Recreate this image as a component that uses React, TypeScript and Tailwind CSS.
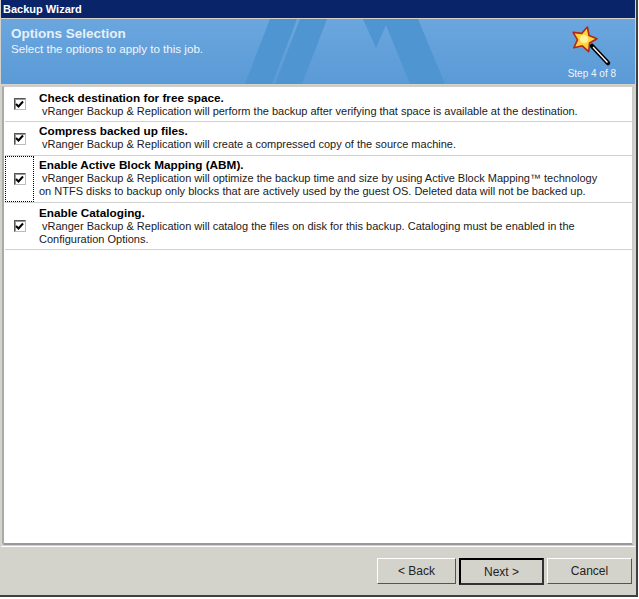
const font = { fontFamily: '"Liberation Sans", Arial, sans-serif' };

function Check() {
  return (
    <span className="flex h-[12px] w-[12px] shrink-0 items-center justify-center border border-t-[#555] border-l-[#555] border-r-[#bbb] border-b-[#bbb] bg-white shadow-[inset_1px_1px_0_#999]">
      <svg width="9" height="9" viewBox="0 0 9 9">
        <path d="M1 4 L3.5 6.5 L8 1.5" fill="none" stroke="#000" strokeWidth="2" />
      </svg>
    </span>
  );
}

function Row({ h, pt, title, lines, focus }: { h: string; pt: string; title: string; lines: string[]; focus?: boolean }) {
  return (
    <div className={`flex ${h} border-b border-[#d0d0d0]`}>
      <div className={`flex w-[29px] shrink-0 items-center justify-center ${focus ? "border border-dotted border-black" : ""}`}>
        <Check />
      </div>
      <div className={`pl-[5px] ${pt} text-[11px] leading-[13px] text-[#1a1a1a]`}>
        <div className="text-[11.75px] font-bold leading-[14px] text-black">{title}</div>
        {lines.map((l, i) => (
          <div key={i} className="whitespace-pre">{l}</div>
        ))}
      </div>
    </div>
  );
}

export default function App() {
  return (
    <div className="h-[599px] w-[639px] overflow-hidden bg-white" style={font}>
      <div className="flex h-[597px] w-[638px] flex-col border-r-2 border-b-2 border-[#404040] bg-[#d4d3cb] px-px">
        <div className="h-[18px] shrink-0 bg-[#0a246a] pl-[2px] text-[11px] font-bold leading-[18px] text-white">
          Backup Wizard
        </div>
        <div className="relative mt-px h-[65px] shrink-0 overflow-hidden bg-gradient-to-b from-[#6ba6de] to-[#5a9ad6] pl-[10px] pt-[8px]">
          <svg className="absolute inset-0" width="634" height="65" viewBox="0 0 634 65">
            <path d="M244 65 L269 0 L296 0 L271 65 Z" fill="#4f95d2" />
            <path d="M274 65 L299 0 L326 0 L301 65 Z" fill="#4f95d2" />
            <path d="M362 0 L417 0 L444 65 L409 65 L385 6 L375 29 Z" fill="#4f95d2" />
          </svg>
          <div className="relative text-[13.5px] font-bold leading-[14px] text-[#e6f0fa]">Options Selection</div>
          <div className="relative mt-px text-[11.6px] leading-[13px] text-[#f0f6fc]">Select the options to apply to this job.</div>
          <div className="absolute right-[19px] top-[49px] text-[10px] leading-[12px] text-[#eef5fb]">Step 4 of 8</div>
          <svg className="absolute left-[568px] top-[6px]" width="50" height="42" viewBox="0 0 50 42">
            <path d="M23 21 L39 38" stroke="#000" strokeWidth="4.5" strokeLinecap="round" />
            <path d="M24 22 L38.5 37.5" stroke="#fff" strokeWidth="1.3" />
            <path d="M18.4 2 L20 10.4 L28 13.8 L20.5 18 L19.7 26.6 L13.3 20.8 L4.9 22.7 L8.5 14.8 L4.1 7.4 L12.7 8.4 Z" fill="#ffd63a" stroke="#b3261a" strokeWidth="1.6" strokeLinejoin="round" />
            <circle cx="15" cy="14" r="4" fill="#fff29a" />
          </svg>
        </div>
        <div className="mx-px mt-px h-[460px] shrink-0 rounded-[3px] border-2 border-t-[#ccc] border-l-[#aaa] border-r-[#ccc] border-b-[#999] bg-white pl-px">
          <Row h="h-[35px]" pt="pt-[4px]" title="Check destination for free space." lines={[" vRanger Backup & Replication will perform the backup after verifying that space is available at the destination."]} />
          <Row h="h-[34px]" pt="pt-[2px]" title="Compress backed up files." lines={[" vRanger Backup & Replication will create a compressed copy of the source machine."]} />
          <Row focus h="h-[47px]" pt="pt-[2px]" title="Enable Active Block Mapping (ABM)." lines={[" vRanger Backup & Replication will optimize the backup time and size by using Active Block Mapping™ technology", "on NTFS disks to backup only blocks that are actively used by the guest OS. Deleted data will not be backed up."]} />
          <Row h="h-[47px]" pt="pt-[3px]" title="Enable Cataloging." lines={[" vRanger Backup & Replication will catalog the files on disk for this backup. Cataloging must be enabled in the", "Configuration Options."]} />
        </div>
        <div className="mt-px flex min-h-0 flex-1 justify-end gap-[3px] border-t border-white pr-[3px] pt-[11px]">
          <button className="h-[26px] w-[79px] border border-t-white border-l-white border-r-[#555] border-b-[#555] bg-[#d4d3cb] text-[12px] text-[#222]">&lt; Back</button>
          <button className="h-[27px] w-[85px] border-2 border-t-black border-l-black border-r-[#333] border-b-[#333] bg-[#d4d3cb] text-[12px] text-[#222]">Next &gt;</button>
          <button className="h-[26px] w-[85px] border border-t-white border-l-white border-r-[#555] border-b-[#555] bg-[#d4d3cb] text-[12px] text-[#222]">Cancel</button>
        </div>
      </div>
    </div>
  );
}
